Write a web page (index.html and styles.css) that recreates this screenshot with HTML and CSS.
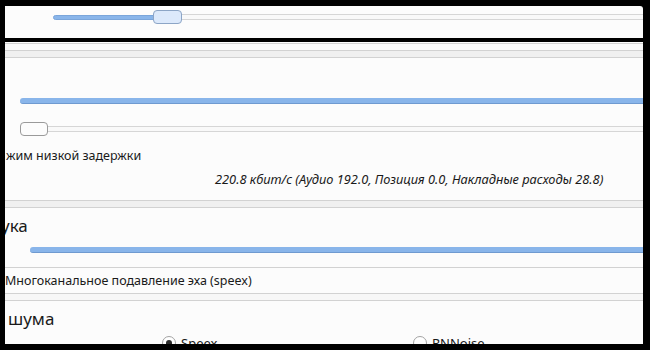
FILE: index.html
```html
<!DOCTYPE html>
<html lang="ru">
<head>
<meta charset="utf-8">
<link rel="stylesheet" href="styles.css">
</head>
<body>
<div class="frame">
  <section class="top-panel">
    <div class="slider">
      <div class="fill fill-top"></div>
      <div class="thumb thumb-blue"></div>
      <div class="track"></div>
    </div>
  </section>
  <section class="main-panel">
    <div class="sep-a"></div>
    <div class="sep-b"></div>

    <div class="group g1">
      <div class="bar bar-1"></div>
      <div class="slider slider-2">
        <div class="thumb thumb-white"></div>
        <div class="track"></div>
      </div>
      <div class="label low-latency">жим низкой задержки</div>
      <div class="label bitrate">220.8 кбит/с (Аудио 192.0, Позиция 0.0, Накладные расходы 28.8)</div>
    </div>
    <div class="sep-c"></div>

    <div class="group g2">
      <div class="title t-sound">ука</div>
      <div class="bar bar-2"></div>
      <div class="rule"></div>
      <div class="label echo">Многоканальное подавление эха (speex)</div>
    </div>
    <div class="sep-d"></div>

    <div class="group g3">
      <div class="title t-noise">шума</div>
      <div class="radios">
        <div class="radio-item r1"><span class="radio checked"></span><span class="radio-label">Speex</span></div>
        <div class="radio-item r2"><span class="radio"></span><span class="radio-label">RNNoise</span></div>
      </div>
    </div>
  </section>
</div>
</body>
</html>
```

FILE: styles.css
```css
* { box-sizing: border-box; }
html, body { margin: 0; padding: 0; }
body {
  background: #000;
  width: 650px;
  height: 350px;
  overflow: hidden;
  font-family: "Noto Sans", "Open Sans", sans-serif;
  color: #1a1a1a;
}
.frame {
  height: 350px;
  padding: 6px 7px 6px 5px;
  display: flex;
  flex-direction: column;
  gap: 4px;
}
.top-panel {
  height: 32px;
  flex: none;
  background: #fcfcfc;
  padding: 4px 0 0 48px;
  border-top-right-radius: 3px;
}
.slider {
  display: flex;
  align-items: center;
  height: 14px;
}
.fill {
  height: 5px;
  background: #89b5ea;
  border: 1px solid #7aa5da;
  border-radius: 3px 0 0 3px;
}
.fill-top { width: 101px; margin-right: -1px; }
.thumb {
  flex: none;
  width: 29px;
  height: 14px;
  border-radius: 4px;
}
.thumb-blue { background: #dce9fb; border: 1px solid #8ca5c6; }
.thumb-white { width: 28px; background: #fcfcfc; border: 1px solid #9a9a9a; }
.track {
  flex: 1;
  height: 6px;
  border-top: 1px solid #d6d6d6;
  border-bottom: 1px solid #d6d6d6;
  background: #f9f9f9;
}
.main-panel {
  flex: 1;
  background: #fcfcfc;
  overflow: hidden;
}
.sep-a {
  margin-top: 1px;
  height: 7px;
  border-top: 1px solid #d2d2d2;
  background: #fafafa;
}
.sep-b, .sep-c, .sep-d {
  height: 8px;
  border-top: 1px solid #d2d2d2;
  border-bottom: 1px solid #d2d2d2;
  background: #f0f0f0;
}
.sep-d { background: #f7f7f7; }
.group { display: flex; flex-direction: column; }
.g1 { height: 142px; padding-top: 40px; }
.bar {
  height: 6px;
  background: #89b5ea;
  border-bottom: 1px solid #6f9ad0;
  border-radius: 3px 0 0 3px;
}
.bar-1 { margin-left: 15px; }
.slider-2 { margin: 18px 0 0 15px; }
.label { font-size: 12.5px; line-height: 18px; white-space: nowrap; }
.low-latency { margin-top: 11px; padding-left: 1px; }
.bitrate { margin-top: 5px; padding-left: 210px; font-style: italic; font-size: 12.8px; }
.g2 { height: 85px; }
.title { font-size: 17px; line-height: 24px; white-space: nowrap; }
.t-sound { margin-top: 6px; text-indent: -4px; }
.bar-2 { margin: 9px 0 0 25px; }
.rule { margin-top: 14px; height: 1px; background: #d2d2d2; }
.echo { margin-top: 4px; }
.t-noise { margin-top: 6px; padding-left: 3px; }
.radios { display: flex; margin-top: 4px; padding-left: 157px; }
.radio-item { display: flex; align-items: center; gap: 5px; font-size: 13px; line-height: 16px; }
.r1 { width: 251px; }
.radio {
  flex: none;
  width: 14px;
  height: 14px;
  border-radius: 50%;
  border: 1px solid #a3a3a3;
  background: #fff;
  display: flex;
  align-items: center;
  justify-content: center;
}
.radio.checked::after {
  content: "";
  width: 6px;
  height: 6px;
  border-radius: 50%;
  background: #2b2b2b;
}
```
